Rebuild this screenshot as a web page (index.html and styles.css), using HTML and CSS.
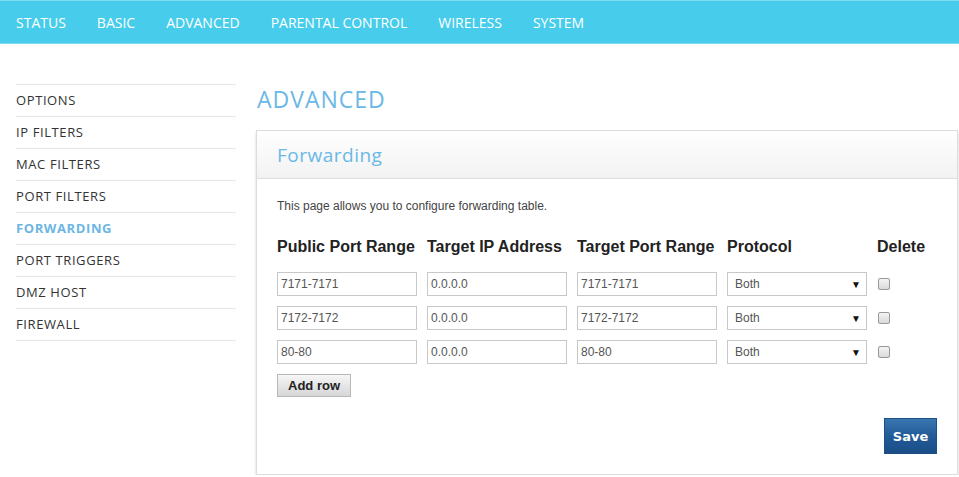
FILE: index.html
```html
<!DOCTYPE html>
<html lang="en">
<head>
  <meta charset="UTF-8" />
  <title>Advanced - Forwarding</title>
  <link rel="stylesheet" href="styles.css">
</head>
<body>
  <!-- Top navigation -->
  <div class="topnav">
    <a href="#">STATUS</a>
    <a href="#">BASIC</a>
    <a href="#">ADVANCED</a>
    <a href="#">PARENTAL CONTROL</a>
    <a href="#">WIRELESS</a>
    <a href="#">SYSTEM</a>
  </div>

  <div class="page">
    <!-- Section menu -->
    <ul class="sidemenu">
      <li><a href="#">OPTIONS</a></li>
      <li><a href="#">IP FILTERS</a></li>
      <li><a href="#">MAC FILTERS</a></li>
      <li><a href="#">PORT FILTERS</a></li>
      <li class="active"><a href="#">FORWARDING</a></li>
      <li><a href="#">PORT TRIGGERS</a></li>
      <li><a href="#">DMZ HOST</a></li>
      <li><a href="#">FIREWALL</a></li>
    </ul>

    <div class="content">
      <h1>ADVANCED</h1>
      <div class="panel">
        <div class="panel-head">Forwarding</div>
        <div class="panel-body">
          <p class="intro">This page allows you to configure forwarding table.</p>
          <table class="fwd">
            <tr>
              <th>Public Port Range</th>
              <th>Target IP Address</th>
              <th>Target Port Range</th>
              <th>Protocol</th>
              <th>Delete</th>
            </tr>
            <tr>
              <td><input type="text" value="7171-7171" /></td>
              <td><input type="text" value="0.0.0.0" /></td>
              <td><input type="text" value="7171-7171" /></td>
              <td><div class="select">Both<span>&#9660;</span></div></td>
              <td><span class="check"></span></td>
            </tr>
            <tr>
              <td><input type="text" value="7172-7172" /></td>
              <td><input type="text" value="0.0.0.0" /></td>
              <td><input type="text" value="7172-7172" /></td>
              <td><div class="select">Both<span>&#9660;</span></div></td>
              <td><span class="check"></span></td>
            </tr>
            <tr>
              <td><input type="text" value="80-80" /></td>
              <td><input type="text" value="0.0.0.0" /></td>
              <td><input type="text" value="80-80" /></td>
              <td><div class="select">Both<span>&#9660;</span></div></td>
              <td><span class="check"></span></td>
            </tr>
          </table>
          <button class="btn-add">Add row</button>
          <div class="actions">
            <button class="btn-save">Save</button>
          </div>
        </div>
      </div>
    </div>
  </div>
</body>
</html>
```

FILE: styles.css
```css
body {
  margin: 0;
  background: #fff;
  font-family: "Open Sans", "Liberation Sans", sans-serif;
  color: #333;
}
.topnav {
  display: flex;
  gap: 31px;
  align-items: center;
  height: 42px;
  padding: 0 16px;
  background: #47cdeb;
  border-top: 1px solid #7fdcf2;
  border-bottom: 1px solid #7fdcf2;
}
.topnav a {
  color: #fff;
  text-decoration: none;
  font-size: 14px;
  line-height: 42px;
  padding-top: 2px;
}
.page {
  display: flex;
  padding: 40px 0 0 16px;
}
.sidemenu {
  list-style: none;
  margin: 0;
  padding: 0;
  width: 220px;
  border-top: 1px solid #e6e6e6;
}
.sidemenu li {
  height: 31px;
  border-bottom: 1px solid #e6e6e6;
  display: flex;
  align-items: center;
}
.sidemenu a {
  color: #333;
  text-decoration: none;
  font-size: 13px;
  letter-spacing: 0.6px;
  line-height: 29px;
}
.sidemenu .active a {
  color: #6cb6e4;
  font-weight: bold;
}
.content {
  margin-left: 20px;
  width: 702px;
}
h1 {
  margin: 0 0 16px 1px;
  height: 30px;
  line-height: 30px;
  font-size: 23px;
  font-weight: normal;
  letter-spacing: 1px;
  color: #6ab8e6;
}
.panel {
  border: 1px solid #dcdcdc;
  box-shadow: 0 3px 3px rgba(0, 0, 0, 0.16);
}
.panel-head {
  height: 47px;
  line-height: 48px;
  padding: 0 20px;
  font-size: 19px;
  letter-spacing: 0.5px;
  color: #6ab8e6;
  background: linear-gradient(#fff, #f2f2f2);
  border-bottom: 1px solid #dedede;
}
.panel-body {
  padding: 20px 20px 20px;
  font-family: "Liberation Sans", Arial, sans-serif;
}
.intro {
  margin: 0 0 25px;
  font-size: 12px;
  color: #444;
}
.fwd {
  border-collapse: collapse;
}
.fwd th {
  width: 150px;
  text-align: left;
  padding: 0 0 16px;
  font-size: 16px;
  color: #222;
}
.fwd th:last-child {
  width: auto;
}
.fwd td {
  padding: 0 0 10px;
}
.fwd input {
  box-sizing: border-box;
  width: 140px;
  height: 24px;
  margin: 0;
  padding: 0 3px;
  border: 1px solid #c8c8c8;
  font-family: "Liberation Sans", Arial, sans-serif;
  font-size: 12px;
  color: #555;
}
.select {
  box-sizing: border-box;
  width: 140px;
  height: 24px;
  display: flex;
  align-items: center;
  justify-content: space-between;
  padding: 0 5px 0 7px;
  border: 1px solid #c8c8c8;
  font-size: 12px;
  color: #555;
}
.select span {
  font-size: 10px;
  color: #111;
}
.check {
  display: block;
  width: 10px;
  height: 10px;
  margin-left: 1px;
  border: 1px solid #999;
  border-radius: 2px;
  background: linear-gradient(#f4f4f4, #d9d9d9);
}
.btn-add {
  display: block;
  width: 74px;
  height: 23px;
  margin-top: 0;
  padding: 0;
  border: 1px solid #b8b8b8;
  background: linear-gradient(#f6f6f6, #d6d6d6);
  font-family: "Liberation Sans", Arial, sans-serif;
  font-weight: bold;
  font-size: 13px;
  color: #222;
}
.actions {
  display: flex;
  justify-content: flex-end;
  margin-top: 21px;
}
.btn-save {
  width: 53px;
  height: 36px;
  padding: 0;
  border: 1px solid #1d4f86;
  background: linear-gradient(#3a76b0, #215b98 50%, #1a4d87);
  color: #fff;
  font-family: "DejaVu Sans", Verdana, sans-serif;
  font-weight: bold;
  font-size: 13px;
}
```
